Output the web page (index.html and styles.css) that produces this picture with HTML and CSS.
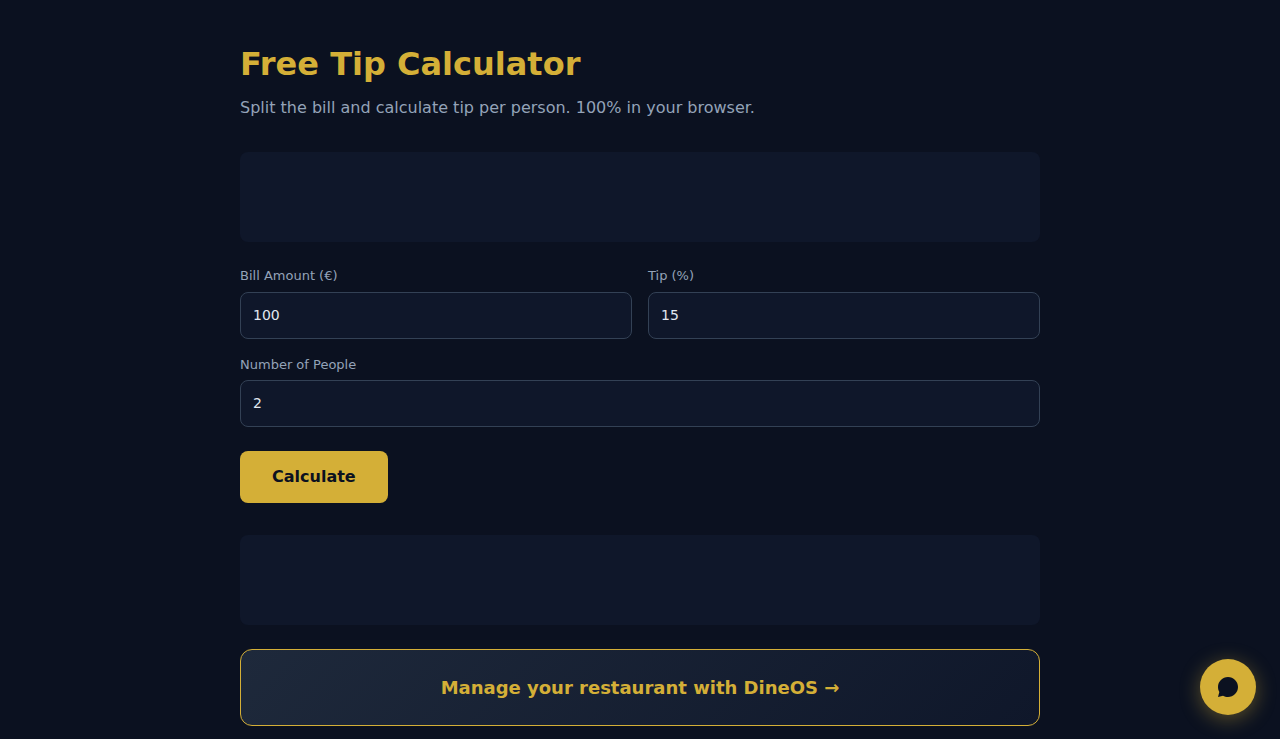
FILE: index.html
```html
<!DOCTYPE html>
<html lang="en">
<head>
<meta charset="utf-8">
<meta name="viewport" content="width=device-width, initial-scale=1">
<title>Free Tip Calculator</title>
<link rel="stylesheet" href="styles.css">
</head>
<body>
<main class="container">
  <h1 class="title">Free Tip Calculator</h1>
  <p class="subtitle">Split the bill and calculate tip per person. 100% in your browser.</p>
  <div class="slot"></div>
  <form class="form">
    <div class="row">
      <div class="field">
        <label for="bill">Bill Amount (€)</label>
        <input id="bill" type="text" inputmode="decimal" value="100">
      </div>
      <div class="field">
        <label for="tip">Tip (%)</label>
        <input id="tip" type="text" inputmode="decimal" value="15">
      </div>
    </div>
    <div class="field">
      <label for="people">Number of People</label>
      <input id="people" type="text" inputmode="numeric" value="2">
    </div>
    <button class="calculate" type="button">Calculate</button>
  </form>
  <div class="slot"></div>
  <div class="promo"><a href="#">Manage your restaurant with DineOS →</a></div>
</main>
<button class="chat" type="button" aria-label="Open chat">
  <svg viewBox="0 0 24 24" width="24" height="24" fill="currentColor" aria-hidden="true"><path d="M12 2C6.480 2 2 6.480 2 12c0 1.820.490 3.530 1.340 5L2 22l5-1.340C8.470 21.510 10.180 22 12 22c5.520 0 10-4.480 10-10S17.520 2 12 2z"/></svg>
</button>
</body>
</html>
```

FILE: styles.css
```css
* {
  box-sizing: border-box;
  margin: 0;
  padding: 0;
}

body {
  min-height: 100vh;
  background: #0b1120;
  color: #e2e8f0;
  font-family: "DejaVu Sans", sans-serif;
  font-size: 16px;
  line-height: 1.5;
}

.container {
  max-width: 848px;
  margin: 0 auto;
  padding: 40px 24px;
}

.title {
  margin-bottom: 8px;
  color: #d4af37;
  font-size: 32px;
}

.subtitle {
  margin-bottom: 32px;
  color: #94a3b8;
}

.slot {
  min-height: 90px;
  border-radius: 8px;
  background: #0f172a;
}

.form {
  margin: 24px 0 32px;
}

.row {
  display: grid;
  grid-template-columns: 1fr 1fr;
  gap: 16px;
}

.field {
  margin-bottom: 16px;
}

.field label {
  display: block;
  margin-bottom: 6px;
  color: #94a3b8;
  font-size: 13px;
}

.field input {
  display: block;
  width: 100%;
  padding: 14px 12px;
  border: 1px solid #334155;
  border-radius: 8px;
  background: #0f172a;
  color: #e2e8f0;
  font: 14px/17px "DejaVu Sans", sans-serif;
}

.calculate {
  display: block;
  margin-top: 24px;
  padding: 16px 32px;
  border: 0;
  border-radius: 8px;
  background: #d4af37;
  color: #0b1120;
  font: bold 16px/20px "DejaVu Sans", sans-serif;
  cursor: pointer;
}

.promo {
  margin-top: 24px;
  padding: 24px;
  border: 1px solid #d4af37;
  border-radius: 12px;
  background: linear-gradient(135deg, #1e293b, #0f172a);
  text-align: center;
}

.promo a {
  color: #d4af37;
  font-size: 18px;
  font-weight: bold;
  text-decoration: none;
}

.chat {
  position: fixed;
  right: 24px;
  bottom: 24px;
  display: flex;
  align-items: center;
  justify-content: center;
  width: 56px;
  height: 56px;
  border: 0;
  border-radius: 50%;
  background: #d4af37;
  color: #0b1120;
  box-shadow: 0 4px 20px rgba(212, 175, 55, 0.4);
  cursor: pointer;
}
```
